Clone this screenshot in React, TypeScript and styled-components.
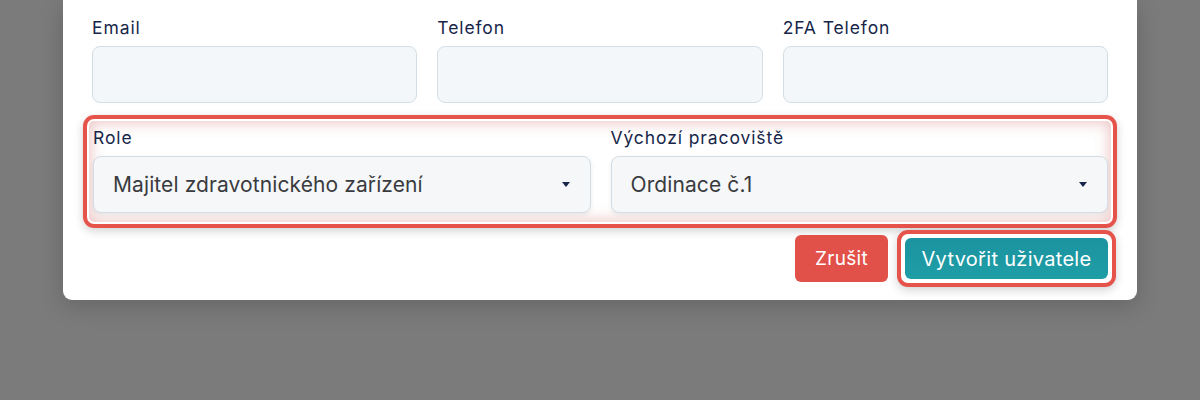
import React from "react";
import styled, { createGlobalStyle } from "styled-components";

const GlobalStyle = createGlobalStyle`
  html, body {
    margin: 0;
    padding: 0;
    background: #7b7b7b;
    width: 1200px;
    height: 400px;
    overflow: hidden;
  }
  body {
    font-family: Inter, "Noto Sans", "DejaVu Sans", sans-serif;
  }
  * { box-sizing: border-box; }
`;

const Card = styled.div`
  margin-left: 63px;
  width: 1074px;
  background: #ffffff;
  border-radius: 0 0 9px 9px;
  padding: 17px 29px 13px 29px;
  box-shadow: 0 6px 24px rgba(0, 0, 0, 0.18);
`;

const Grid = styled.div<{ $cols: number }>`
  display: grid;
  grid-template-columns: repeat(${(p) => p.$cols}, 1fr);
  column-gap: 20px;
`;

const Field = styled.div`
  display: flex;
  flex-direction: column;
`;

const Label = styled.label`
  font-size: 17.5px;
  line-height: 22px;
  color: #17264a;
  margin-bottom: 7px;
  letter-spacing: 0.9px;
`;

const Input = styled.div`
  height: 57px;
  background: #f4f7f9;
  border: 1px solid #d3dfe5;
  border-radius: 8px;
`;

const Highlight = styled.div`
  margin: 12px -9px 0 -9px;
  border: 4px solid #e5534b;
  border-radius: 11px;
  padding: 8px 5px 11px 6px;
  box-shadow: 0 3px 10px rgba(0, 0, 0, 0.18), inset 0 0 0 2px #ffffff,
    inset 0 0 14px 4px rgba(214, 120, 120, 0.42);
`;

const Select = styled.div`
  height: 57px;
  display: flex;
  align-items: center;
  justify-content: space-between;
  padding: 0 20px 0 19px;
  background: #f5f7f9;
  border: 1px solid #d4dde3;
  border-radius: 8px;
  box-shadow: 0 2px 5px rgba(0, 0, 0, 0.08);
  font-size: 21px;
  color: #3a3b3e;
  letter-spacing: 0.1px;
`;

const Caret = styled.span`
  width: 0;
  height: 0;
  border-left: 4.5px solid transparent;
  border-right: 4.5px solid transparent;
  border-top: 5px solid #17264a;
`;

const Actions = styled.div`
  display: flex;
  justify-content: flex-end;
  align-items: center;
  gap: 9px;
  margin: 2px -8px 0 0;
`;

const Button = styled.button<{ $variant: "danger" | "primary" }>`
  border: none;
  font-family: inherit;
  color: #ffffff;
  font-size: ${(p) => (p.$variant === "danger" ? "19px" : "20px")};
  border-radius: 6px;
  cursor: pointer;
  background: ${(p) =>
    p.$variant === "danger"
      ? "#e2504a"
      : "linear-gradient(180deg, #1b93a0 0%, #1f9ea6 100%)"};
  height: ${(p) => (p.$variant === "danger" ? "47px" : "41px")};
  width: ${(p) => (p.$variant === "danger" ? "93px" : "203px")};
  padding: 0;
  letter-spacing: 0.3px;
`;

const ButtonHighlight = styled.div`
  border: 4px solid #e5534b;
  border-radius: 11px;
  padding: 4px;
  background: #ffffff;
  box-shadow: 0 3px 10px rgba(0, 0, 0, 0.18);
  display: flex;
`;

export default function App() {
  return (
    <>
      <GlobalStyle />
      <Card>
        <Grid $cols={3}>
          <Field>
            <Label>Email</Label>
            <Input />
          </Field>
          <Field>
            <Label>Telefon</Label>
            <Input />
          </Field>
          <Field>
            <Label>2FA Telefon</Label>
            <Input />
          </Field>
        </Grid>
        <Highlight>
          <Grid $cols={2}>
            <Field>
              <Label>Role</Label>
              <Select>
                <span>Majitel zdravotnického zařízení</span>
                <Caret />
              </Select>
            </Field>
            <Field>
              <Label>Výchozí pracoviště</Label>
              <Select>
                <span>Ordinace č.1</span>
                <Caret />
              </Select>
            </Field>
          </Grid>
        </Highlight>
        <Actions>
          <Button $variant="danger">Zrušit</Button>
          <ButtonHighlight>
            <Button $variant="primary">Vytvořit uživatele</Button>
          </ButtonHighlight>
        </Actions>
      </Card>
    </>
  );
}
